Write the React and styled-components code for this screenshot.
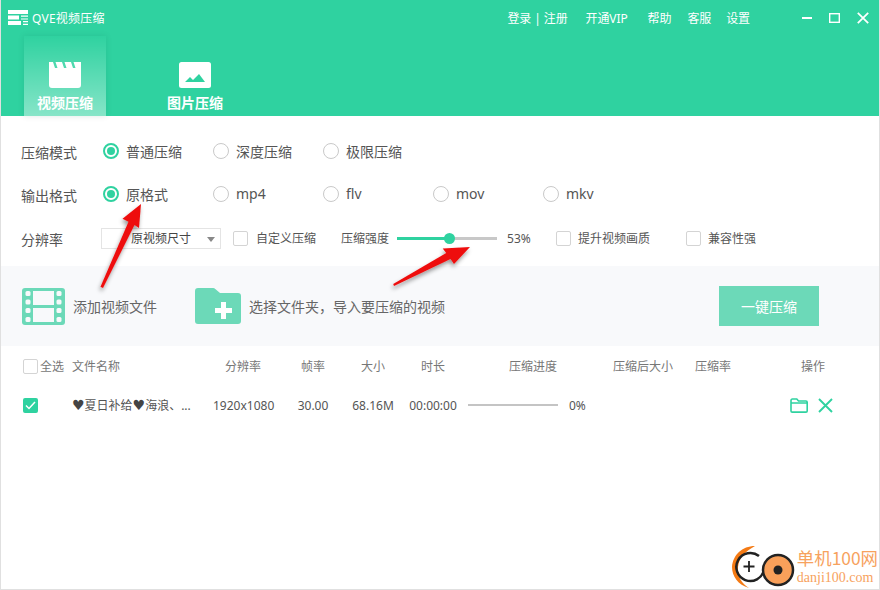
import React from "react";
import styled, { createGlobalStyle } from "styled-components";

const Global = createGlobalStyle`
  html, body { margin: 0; padding: 0; background: #fff; }
  * { box-sizing: border-box; }
  body { font-family: "Noto Sans", "Noto Sans CJK SC", sans-serif; }
`;

const GREEN = "#2fd2a0";
const SOFT = "#6cd9b8";

const Win = styled.div`
  position: relative; width: 880px; height: 590px; overflow: hidden; background: #fff;
  display: flex; flex-direction: column;
  border: 1px solid #e0e0e0; border-top: 0;
  color: #555; font-size: 14px;
`;
const Header = styled.header`
  height: 116px; margin: 0 -1px; background: ${GREEN}; color: #fff; display: flex; flex-direction: column; flex: none;
`;
const TitleBar = styled.div`
  height: 36px; display: flex; align-items: center; padding: 0 11px 0 8px; flex: none;
`;
const Brand = styled.div`
  display: flex; align-items: center; gap: 4px; font-size: 12px; letter-spacing: .25px;
`;
const TopMenu = styled.nav`
  margin-left: auto; display: flex; font-size: 12px; letter-spacing: -0.1px;
`;
const MenuItem = styled.span`
  margin-left: ${p => p.$ml || 0}px;
`;
const WinBtns = styled.div`
  display: flex; align-items: center; margin-left: 52px; gap: 17px;
`;
const Tabs = styled.div`
  display: flex; padding-left: 24px; flex: 1; min-height: 0;
`;
const Tab = styled.div`
  width: 82px; margin-right: 48px; display: flex; flex-direction: column; align-items: center; justify-content: flex-end;
  gap: 4px; padding-bottom: 4px; font-size: 14px; font-weight: 700; white-space: nowrap;
  background: ${p => p.$active ? "linear-gradient(180deg, rgba(255,255,255,0) 0%, rgba(255,255,255,.42) 100%)" : "transparent"};
  box-shadow: ${p => p.$active ? "0 0 6px rgba(0,90,70,.14)" : "none"};
`;
const Options = styled.section`
  height: 150px; padding: 13px 0 0 20px; flex: none; display: flex; flex-direction: column;
`;
const OptRow = styled.div`
  height: ${p => p.$h || 43}px; display: flex; align-items: center; flex: none;
`;
const RowLabel = styled.div`
  width: ${p => p.$w || 82}px; flex: none; position: relative; top: 1px;
`;
const RadioItem = styled.label`
  width: 110px; flex: none; display: flex; align-items: center; gap: 7px;
`;
const Radio = styled.span`
  width: 16px; height: 16px; border-radius: 50%; flex: none; display: flex; align-items: center; justify-content: center;
  border: ${p => p.$on ? `2px solid ${GREEN}` : "1.5px solid #c9c9c9"};
  &::after { content: ""; width: 8px; height: 8px; border-radius: 50%; background: ${p => p.$on ? GREEN : "transparent"}; }
`;
const Select = styled.div`
  width: 120px; height: 21px; border: 1px solid #e4e4e4; display: flex; align-items: center; padding-left: 29px;
  font-size: 12px; color: #444; position: relative; flex: none;
  &::after { content: ""; position: absolute; right: 5px; top: 8px; border: 4px solid transparent; border-top: 5px solid #888; border-bottom: 0; }
`;
const Check = styled.span`
  width: 15px; height: 15px; border: 1.5px solid #d4d4d4; border-radius: 2px; flex: none; display: inline-block;
`;
const CheckLabel = styled.label`
  display: flex; align-items: center; gap: ${p => p.$gap || 8}px; font-size: 12px; margin-left: ${p => p.$ml}px; white-space: nowrap;
`;
const StrengthLabel = styled.span`
  font-size: 12px; margin-left: 25px; white-space: nowrap;
`;
const Slider = styled.div`
  width: 100px; height: 3px; background: #c8c8c8; margin-left: 8px; position: relative; flex: none;
`;
const SliderFill = styled.div`
  height: 100%; background: ${GREEN};
`;
const SliderThumb = styled.div`
  position: absolute; top: -4px; width: 11px; height: 11px; margin-left: -6px; border-radius: 50%; background: ${GREEN};
`;
const Pct = styled.span`
  font-size: 12px; margin-left: 10px; width: 25px; flex: none;
`;
const ActionBar = styled.section`
  height: 80px; background: #f8f9fb; display: flex; align-items: center; padding: 0 60px 0 21px; flex: none;
`;
const ActionItem = styled.div`
  display: flex; align-items: center; gap: 8px; margin-right: ${p => p.$mr || 0}px; font-size: 14px; color: #666;
`;
const Primary = styled.button`
  margin-left: auto; width: 100px; height: 40px; border: 0; background: ${SOFT}; color: #fff; font: inherit; font-size: 14px;
`;
const Grid = styled.div`
  display: grid; grid-template-columns: 49px 141px 60px 10px 60px 60px 60px 140px 80px 60px 30px 80px;
  padding-left: 22px; align-items: center; height: ${p => p.$h}px; font-size: 12px; color: ${p => p.$head ? "#777" : "#555"};
`;
const Cell = styled.div`
  text-align: center; white-space: nowrap; grid-column: ${p => p.$col};
`;
const SelectCell = styled.div`
  display: flex; align-items: center; gap: 2px; grid-column: 1; white-space: nowrap;
`;
const NameCell = styled.div`
  grid-column: 2; white-space: nowrap; color: ${p => p.$head ? "#777" : "#555"};
`;
const Heart = styled.span`
  font-family: "DejaVu Sans", sans-serif; font-size: 14px; color: #444;
`;
const ProgressCell = styled.div`
  grid-column: 8; display: flex; align-items: center; padding-left: 5px;
`;
const Bar = styled.div`
  width: 90px; height: 2px; background: #c4c4c4;
`;
const BarPct = styled.span`
  margin-left: 11px;
`;
const CheckedBox = styled.span`
  width: 15px; height: 15px; background: ${GREEN}; border-radius: 2px; display: flex; align-items: center; justify-content: center;
`;
const Ops = styled.div`
  grid-column: 12; display: flex; align-items: center; gap: 10px; padding-left: 17px;
`;
const Overlay = styled.svg`
  position: absolute; left: -1px; top: 0; pointer-events: none;
`;
const Watermark = styled.div`
  position: absolute; right: 1px; bottom: 0; display: flex; align-items: flex-end; gap: 1px;
`;
const WmText = styled.div`
  display: flex; flex-direction: column; color: #f7a25e; line-height: 1; padding-bottom: 4px; white-space: nowrap;
`;
const WmTop = styled.span`
  font-size: 17.4px; font-family: "Noto Sans CJK SC", sans-serif; margin-bottom: 5px;
`;
const WmBottom = styled.span`
  font-size: 14px; font-family: "Liberation Serif", serif;
`;

const Logo = () => (
  <svg width="20" height="16" viewBox="0 0 20 16" fill="#fff">
    <rect x="0" y="0" width="20" height="4" />
    <path d="M0 5.5h11v4H0zM13 5.5h7v1.2h-7zM13 8.4h7v1.1h-7zM0 11h13v4H0zM15 11h5v1.2h-5zM15 13.8h5V15h-5z" />
  </svg>
);
const Clapper = () => (
  <svg width="32" height="26" viewBox="0 0 32 26">
    <path fill="#fff" d="M0 0h4l2 6h2.500L6.500 0H13l2 6h2.500l-2-6H22l2 6h2.500l-2-6H32v23a3 3 0 0 1-3 3H3a3 3 0 0 1-3-3z" />
  </svg>
);
const Picture = () => (
  <svg width="32" height="26" viewBox="0 0 32 26">
    <rect width="32" height="26" rx="2.500" fill="#fff" />
    <path fill={GREEN} d="M6 20l5-5 3 3 6-6 6 8z" />
  </svg>
);
const Film = () => (
  <svg width="43" height="37" viewBox="0 0 43 37">
    <rect width="43" height="37" rx="3" fill={SOFT} />
    <g fill="#f8f9fb">
      <rect x="11" y="3" width="21" height="14" />
      <rect x="11" y="20" width="21" height="14" />
      <rect x="3.500" y="3" width="5" height="5" rx="1.500" />
      <rect x="3.500" y="11.500" width="5" height="5" rx="1.500" />
      <rect x="3.500" y="20" width="5" height="5" rx="1.500" />
      <rect x="3.500" y="29" width="5" height="5" rx="1.500" />
      <rect x="34.500" y="3" width="5" height="5" rx="1.500" />
      <rect x="34.500" y="11.500" width="5" height="5" rx="1.500" />
      <rect x="34.500" y="20" width="5" height="5" rx="1.500" />
      <rect x="34.500" y="29" width="5" height="5" rx="1.500" />
    </g>
  </svg>
);
const FolderPlus = () => (
  <svg width="46" height="36" viewBox="0 0 46 36">
    <path fill={SOFT} d="M3 0h15a3 3 0 0 1 2.300 1L25 5h18a3 3 0 0 1 3 3v25a3 3 0 0 1-3 3H3a3 3 0 0 1-3-3V3a3 3 0 0 1 3-3z" />
    <path fill="#fff" d="M26 14h5v6h6v5h-6v6h-5v-6h-6v-5h6z" />
  </svg>
);
const FolderLine = () => (
  <svg width="18" height="15" viewBox="0 0 18 15" fill="none" stroke={GREEN} strokeWidth="1.600">
    <path d="M1 13V2.500C1 1.600 1.500 1 2.400 1h4.400l1.700 2H16c.7 0 1.200.5 1.200 1.200V13c0 .6-.5 1.100-1.200 1.100H2.200C1.500 14.100 1 13.600 1 13zM1 5h16" />
  </svg>
);
const Cross = ({ size = 15, color = GREEN, w = 1.900 }) => (
  <svg width={size} height={size} viewBox="0 0 15 15" stroke={color} strokeWidth={w} fill="none">
    <path d="M1 1l13 13M14 1L1 14" />
  </svg>
);
const Arrows = () => (
  <Overlay width="880" height="590" viewBox="0 0 880 590">
    <defs>
      <filter id="sh" x="-30%" y="-30%" width="160%" height="160%">
        <feDropShadow dx="-1" dy="3" stdDeviation="2" floodColor="#000" floodOpacity=".4" />
      </filter>
    </defs>
    <g fill="#ee1111" filter="url(#sh)">
      <path d="M141 204l-2 24-4.500-3-31.500 63-2.500-1.200 28-65-6-3z" />
      <path d="M470 247l-16 17-3.500-5-56.500 27-.8-2 53-31-3.500-4.500z" />
    </g>
  </Overlay>
);
const Mark = () => (
  <svg width="64" height="44" viewBox="0 0 64 44">
    <path d="M23 1C10 1 1 10 0 22c0 9 6 18 17 21C10 39 5 31 6 22 7 12 14 6 23 1z" fill="#f47a14" />
    <path d="M27 11a14 14 0 1 0 5 14" fill="none" stroke="#222" strokeWidth="2.500" />
    <path d="M17 16v11M11.500 21.500h11" stroke="#222" strokeWidth="1.800" />
    <circle cx="46" cy="25" r="15" fill="#f9a05a" stroke="#222" strokeWidth="2.500" />
    <circle cx="46" cy="25" r="4.500" fill="#222" />
  </svg>
);

const fmts = ["原格式", "mp4", "flv", "mov", "mkv"];
const modes = ["普通压缩", "深度压缩", "极限压缩"];

export default function App() {
  return (
    <Win>
      <Global />
      <Header>
        <TitleBar>
          <Brand><Logo />QVE视频压缩</Brand>
          <TopMenu>
            <MenuItem>登录 | 注册</MenuItem>
            <MenuItem $ml={18}>开通VIP</MenuItem>
            <MenuItem $ml={20}>帮助</MenuItem>
            <MenuItem $ml={16}>客服</MenuItem>
            <MenuItem $ml={15}>设置</MenuItem>
          </TopMenu>
          <WinBtns>
            <svg width="10" height="10" viewBox="0 0 10 10" fill="#fff"><rect y="4" width="10" height="2" /></svg>
            <svg width="11" height="10" viewBox="0 0 11 10" fill="none" stroke="#fff" strokeWidth="1.400"><rect x=".7" y=".7" width="9.600" height="8.600" /></svg>
            <Cross size={12} color="#fff" w={2.200} />
          </WinBtns>
        </TitleBar>
        <Tabs>
          <Tab $active><Clapper />视频压缩</Tab>
          <Tab><Picture />图片压缩</Tab>
        </Tabs>
      </Header>
      <Options>
        <OptRow>
          <RowLabel>压缩模式</RowLabel>
          {modes.map((m, i) => <RadioItem key={m}><Radio $on={i === 0} />{m}</RadioItem>)}
        </OptRow>
        <OptRow>
          <RowLabel>输出格式</RowLabel>
          {fmts.map((m, i) => <RadioItem key={m}><Radio $on={i === 0} />{m}</RadioItem>)}
        </OptRow>
        <OptRow $h={46}>
          <RowLabel $w={80}>分辨率</RowLabel>
          <Select>原视频尺寸</Select>
          <CheckLabel $ml={12}><Check />自定义压缩</CheckLabel>
          <StrengthLabel>压缩强度</StrengthLabel>
          <Slider><SliderFill style={{ width: "53%" }} /><SliderThumb style={{ left: "53%" }} /></Slider>
          <Pct>53%</Pct>
          <CheckLabel $ml={24} $gap={7}><Check />提升视频画质</CheckLabel>
          <CheckLabel $ml={36} $gap={7}><Check />兼容性强</CheckLabel>
        </OptRow>
      </Options>
      <ActionBar>
        <ActionItem $mr={38}><Film />添加视频文件</ActionItem>
        <ActionItem><FolderPlus />选择文件夹，导入要压缩的视频</ActionItem>
        <Primary>一键压缩</Primary>
      </ActionBar>
      <Grid $h={40} $head>
        <SelectCell><Check />全选</SelectCell>
        <NameCell $head>文件名称</NameCell>
        <Cell $col={3}>分辨率</Cell>
        <Cell $col={5}>帧率</Cell>
        <Cell $col={6}>大小</Cell>
        <Cell $col={7}>时长</Cell>
        <Cell $col={8}>压缩进度</Cell>
        <Cell $col={9}>压缩后大小</Cell>
        <Cell $col={10}>压缩率</Cell>
        <Cell $col={12}>操作</Cell>
      </Grid>
      <Grid $h={38}>
        <SelectCell>
          <CheckedBox>
            <svg width="11" height="9" viewBox="0 0 11 9" fill="none" stroke="#fff" strokeWidth="1.500"><path d="M1 4.500L4 7.500 10 1" /></svg>
          </CheckedBox>
        </SelectCell>
        <NameCell><Heart>♥</Heart>夏日补给<Heart>♥</Heart>海浪、...</NameCell>
        <Cell $col={3}>1920x1080</Cell>
        <Cell $col={5}>30.00</Cell>
        <Cell $col={6}>68.16M</Cell>
        <Cell $col={7}>00:00:00</Cell>
        <ProgressCell><Bar /><BarPct>0%</BarPct></ProgressCell>
        <Ops><FolderLine /><Cross /></Ops>
      </Grid>
      <Arrows />
      <Watermark>
        <Mark />
        <WmText><WmTop>单机100网</WmTop><WmBottom>danji100.com</WmBottom></WmText>
      </Watermark>
    </Win>
  );
}
